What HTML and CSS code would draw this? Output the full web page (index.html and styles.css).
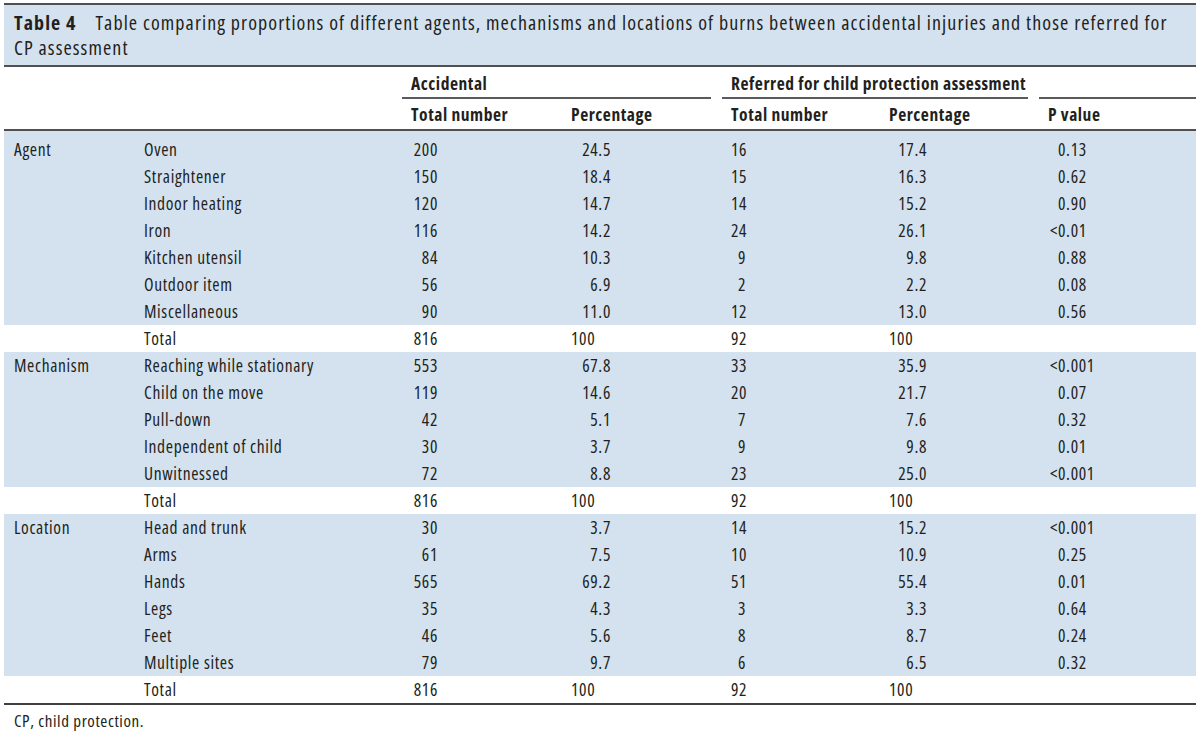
FILE: index.html
```html
<!DOCTYPE html>
<html lang="en">
<head>
<meta charset="utf-8">
<title>Table 4</title>
<link rel="stylesheet" href="styles.css">
</head>
<body>
<div class="wrap">
  <div class="caption"><b class="cap-label">Table 4</b><span class="cap-text">Table comparing proportions of different agents, mechanisms and locations of burns between accidental injuries and those referred for</span> <span class="cap-text">CP assessment</span></div>
  <table class="tbl">
    <colgroup>
      <col class="c1"><col class="c2"><col class="c3"><col class="c4"><col class="c5"><col class="c6"><col class="c7">
    </colgroup>
    <thead>
      <tr class="h1">
        <th></th><th></th>
        <th colspan="2"><div class="grp">Accidental</div></th>
        <th colspan="2"><div class="grp">Referred for child protection assessment</div></th>
        <th><div class="grp last">&nbsp;</div></th>
      </tr>
      <tr class="h2">
        <th></th><th></th>
        <th>Total number</th><th>Percentage</th><th>Total number</th><th>Percentage</th><th>P value</th>
      </tr>
    </thead>
    <tbody>
      <tr class="first"><td>Agent</td><td>Oven</td><td><span class="n3">200</span></td><td><span class="np">24.5</span></td><td><span class="n2">16</span></td><td><span class="nq">17.4</span></td><td><span class="pv">0.13</span></td></tr>
      <tr><td></td><td>Straightener</td><td><span class="n3">150</span></td><td><span class="np">18.4</span></td><td><span class="n2">15</span></td><td><span class="nq">16.3</span></td><td><span class="pv">0.62</span></td></tr>
      <tr><td></td><td>Indoor heating</td><td><span class="n3">120</span></td><td><span class="np">14.7</span></td><td><span class="n2">14</span></td><td><span class="nq">15.2</span></td><td><span class="pv">0.90</span></td></tr>
      <tr><td></td><td>Iron</td><td><span class="n3">116</span></td><td><span class="np">14.2</span></td><td><span class="n2">24</span></td><td><span class="nq">26.1</span></td><td><span class="pv"><i>&lt;</i>0.01</span></td></tr>
      <tr><td></td><td>Kitchen utensil</td><td><span class="n3">84</span></td><td><span class="np">10.3</span></td><td><span class="n2">9</span></td><td><span class="nq">9.8</span></td><td><span class="pv">0.88</span></td></tr>
      <tr><td></td><td>Outdoor item</td><td><span class="n3">56</span></td><td><span class="np">6.9</span></td><td><span class="n2">2</span></td><td><span class="nq">2.2</span></td><td><span class="pv">0.08</span></td></tr>
      <tr><td></td><td>Miscellaneous</td><td><span class="n3">90</span></td><td><span class="np">11.0</span></td><td><span class="n2">12</span></td><td><span class="nq">13.0</span></td><td><span class="pv">0.56</span></td></tr>
      <tr class="total"><td></td><td>Total</td><td><span class="n3">816</span></td><td>100</td><td><span class="n2">92</span></td><td>100</td><td></td></tr>

      <tr><td>Mechanism</td><td>Reaching while stationary</td><td><span class="n3">553</span></td><td><span class="np">67.8</span></td><td><span class="n2">33</span></td><td><span class="nq">35.9</span></td><td><span class="pv"><i>&lt;</i>0.001</span></td></tr>
      <tr><td></td><td>Child on the move</td><td><span class="n3">119</span></td><td><span class="np">14.6</span></td><td><span class="n2">20</span></td><td><span class="nq">21.7</span></td><td><span class="pv">0.07</span></td></tr>
      <tr><td></td><td>Pull-down</td><td><span class="n3">42</span></td><td><span class="np">5.1</span></td><td><span class="n2">7</span></td><td><span class="nq">7.6</span></td><td><span class="pv">0.32</span></td></tr>
      <tr><td></td><td>Independent of child</td><td><span class="n3">30</span></td><td><span class="np">3.7</span></td><td><span class="n2">9</span></td><td><span class="nq">9.8</span></td><td><span class="pv">0.01</span></td></tr>
      <tr><td></td><td>Unwitnessed</td><td><span class="n3">72</span></td><td><span class="np">8.8</span></td><td><span class="n2">23</span></td><td><span class="nq">25.0</span></td><td><span class="pv"><i>&lt;</i>0.001</span></td></tr>
      <tr class="total"><td></td><td>Total</td><td><span class="n3">816</span></td><td>100</td><td><span class="n2">92</span></td><td>100</td><td></td></tr>

      <tr><td>Location</td><td>Head and trunk</td><td><span class="n3">30</span></td><td><span class="np">3.7</span></td><td><span class="n2">14</span></td><td><span class="nq">15.2</span></td><td><span class="pv"><i>&lt;</i>0.001</span></td></tr>
      <tr><td></td><td>Arms</td><td><span class="n3">61</span></td><td><span class="np">7.5</span></td><td><span class="n2">10</span></td><td><span class="nq">10.9</span></td><td><span class="pv">0.25</span></td></tr>
      <tr><td></td><td>Hands</td><td><span class="n3">565</span></td><td><span class="np">69.2</span></td><td><span class="n2">51</span></td><td><span class="nq">55.4</span></td><td><span class="pv">0.01</span></td></tr>
      <tr><td></td><td>Legs</td><td><span class="n3">35</span></td><td><span class="np">4.3</span></td><td><span class="n2">3</span></td><td><span class="nq">3.3</span></td><td><span class="pv">0.64</span></td></tr>
      <tr><td></td><td>Feet</td><td><span class="n3">46</span></td><td><span class="np">5.6</span></td><td><span class="n2">8</span></td><td><span class="nq">8.7</span></td><td><span class="pv">0.24</span></td></tr>
      <tr><td></td><td>Multiple sites</td><td><span class="n3">79</span></td><td><span class="np">9.7</span></td><td><span class="n2">6</span></td><td><span class="nq">6.5</span></td><td><span class="pv">0.32</span></td></tr>
      <tr class="total"><td></td><td>Total</td><td><span class="n3">816</span></td><td>100</td><td><span class="n2">92</span></td><td>100</td><td></td></tr>
    </tbody>
  </table>
  <div class="foot">CP, child protection.</div>
</div>
</body>
</html>
```

FILE: styles.css
```css
html, body {
  margin: 0;
  padding: 0;
  background: #ffffff;
}

body {
  font-family: "Open Sans", "Noto Sans", "DejaVu Sans", sans-serif;
  font-stretch: 75%;
  color: #231f20;
}

.wrap {
  margin: 3px 4px 0 4px;
}

.caption {
  background: #d4e2f0;
  border-top: 2px solid #505050;
  border-bottom: 2px solid #505050;
  padding: 5px 10px 5px 10px;
  font-size: 20px;
  line-height: 25px;
  letter-spacing: 1.08px;
}

.cap-label {
  display: inline-block;
  font-weight: 700;
  letter-spacing: 1.1px;
  margin-right: 19px;
}

.cap-text {
  letter-spacing: 1.08px;
}

.tbl {
  width: 100%;
  border-collapse: collapse;
  table-layout: fixed;
  font-size: 17.5px;
  letter-spacing: 0.65px;
}

.c1 { width: 130px; }
.c2 { width: 267px; }
.c3 { width: 160px; }
.c4 { width: 160px; }
.c5 { width: 158px; }
.c6 { width: 159px; }
.c7 { width: 158px; }

.tbl th {
  text-align: left;
  font-weight: 700;
  padding: 0 0 0 10px;
  white-space: nowrap;
  letter-spacing: 0.55px;
}

.h1 th {
  height: 32px;
  vertical-align: bottom;
  padding-left: 0;
}

.grp {
  margin-left: 1px;
  margin-right: 10px;
  padding-left: 9px;
  height: 31px;
  line-height: 30px;
  border-bottom: 2px solid #5a5a5a;
  box-sizing: border-box;
}

.grp.last {
  margin-right: 0;
}

.h2 th {
  height: 31px;
  line-height: 28px;
  border-bottom: 2px solid #505050;
  vertical-align: middle;
  box-sizing: border-box;
}

.tbl td {
  padding: 0 0 0 10px;
  height: 27px;
  line-height: 27px;
  white-space: nowrap;
  background: #d4e2f0;
  vertical-align: middle;
}

.tbl tr.first td {
  height: 32px;
  padding-top: 5px;
  box-sizing: border-box;
}

.tbl tr.total td {
  background: #ffffff;
}

.tbl tbody tr:last-child td {
  border-bottom: 2px solid #404040;
}

.n3, .np, .n2, .nq, .pv {
  display: inline-block;
  text-align: right;
}

.n3 { width: 27px; }
.np { width: 40px; }
.n2 { width: 15px; }
.nq { width: 38px; }

.pv {
  text-align: left;
  padding-left: 10px;
  position: relative;
}

.pv i {
  font-style: normal;
  position: absolute;
  right: 100%;
  margin-right: -10px;
}

.foot {
  padding: 5px 0 0 10px;
  font-size: 17px;
  line-height: 22px;
  letter-spacing: 0.6px;
}
```
